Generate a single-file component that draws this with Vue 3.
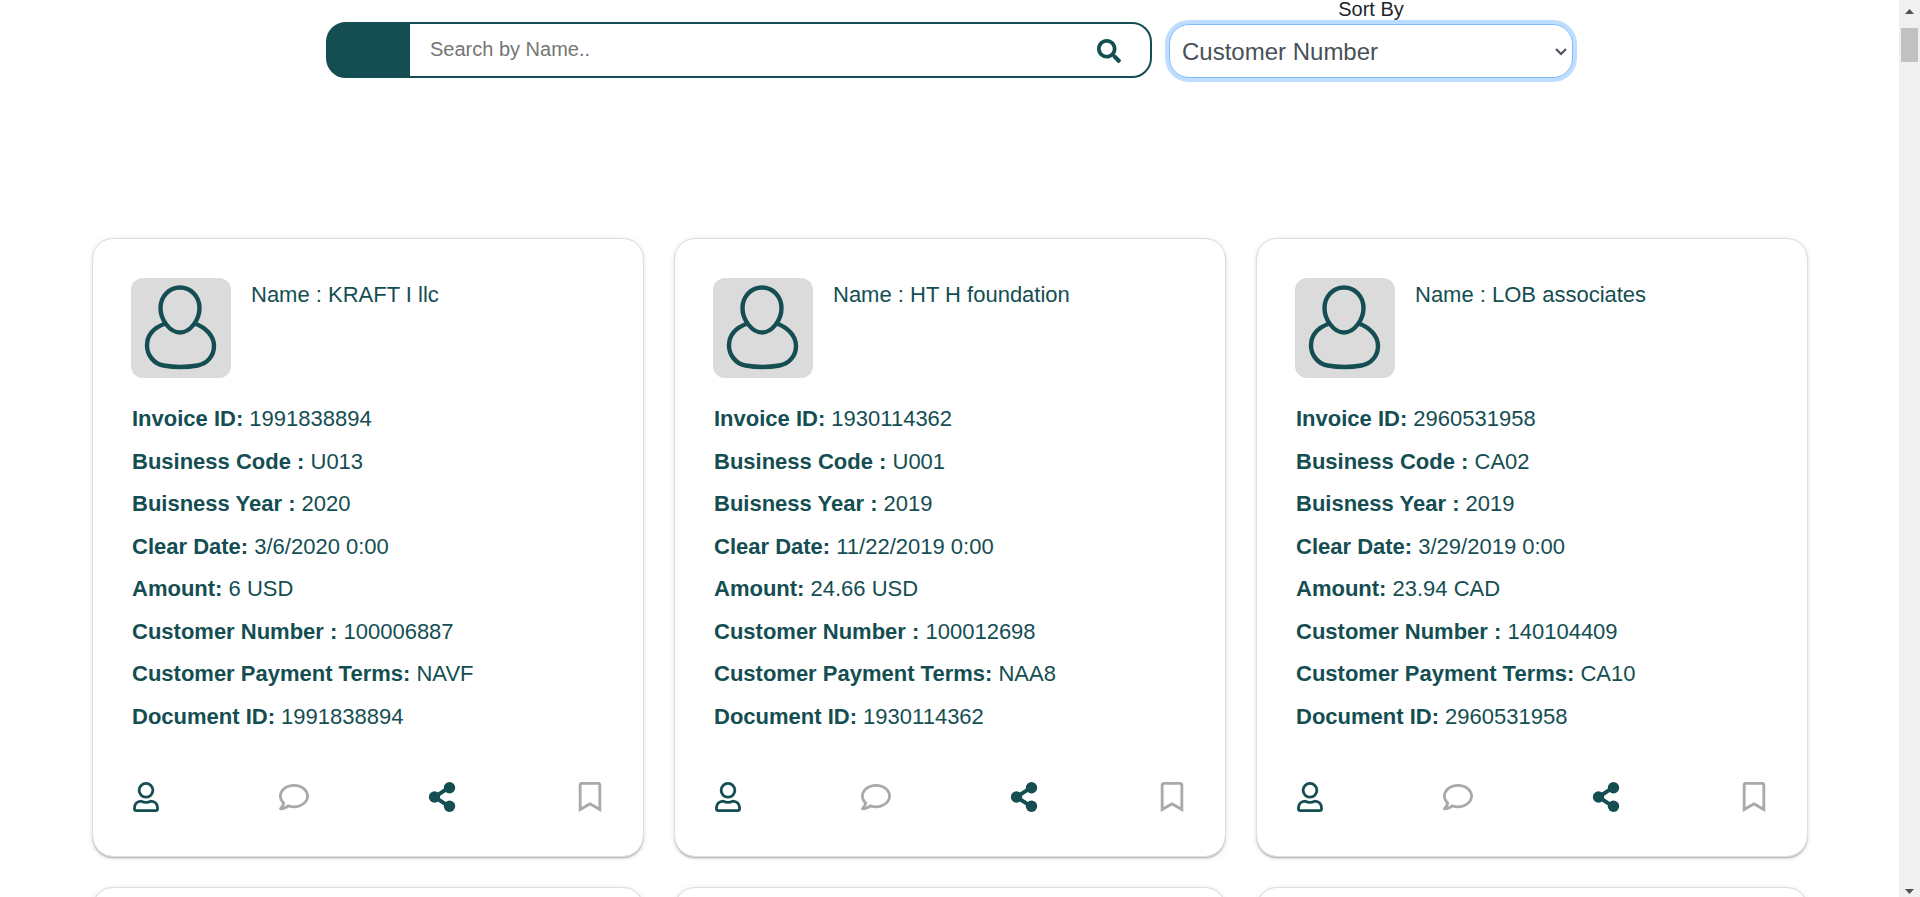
<script setup>
import { ref } from 'vue'

const search = ref('')
const sortBy = ref('Customer Number')
const sortOptions = ['Customer Number', 'Invoice ID', 'Business Code', 'Clear Date', 'Amount']

const labels = [
  ['Invoice ID:', 'invoice'],
  ['Business Code :', 'code'],
  ['Buisness Year :', 'year'],
  ['Clear Date:', 'clear'],
  ['Amount:', 'amount'],
  ['Customer Number :', 'customer'],
  ['Customer Payment Terms:', 'terms'],
  ['Document ID:', 'invoice'],
]

const invoices = [
  { name: 'KRAFT I llc', invoice: '1991838894', code: 'U013', year: '2020', clear: '3/6/2020 0:00', amount: '6 USD', customer: '100006887', terms: 'NAVF' },
  { name: 'HT H foundation', invoice: '1930114362', code: 'U001', year: '2019', clear: '11/22/2019 0:00', amount: '24.66 USD', customer: '100012698', terms: 'NAA8' },
  { name: 'LOB associates', invoice: '2960531958', code: 'CA02', year: '2019', clear: '3/29/2019 0:00', amount: '23.94 CAD', customer: '140104409', terms: 'CA10' },
]
</script>

<template>
  <div class="window">
    <main class="page">
      <form class="toolbar" @submit.prevent>
        <div class="search">
          <span class="search-cap"></span>
          <input v-model="search" class="search-input" type="text" placeholder="Search by Name.." aria-label="Search by Name" />
          <button class="search-button" type="submit" aria-label="Search">
            <svg viewBox="0 0 512 512" width="24" height="24"><path fill="currentColor" d="M505 442.700 405.300 343c-4.500-4.500-10.600-7-17-7H372c27.600-35.300 44-79.700 44-128C416 93.100 322.900 0 208 0S0 93.100 0 208s93.100 208 208 208c48.300 0 92.700-16.400 128-44v16.300c0 6.400 2.500 12.500 7 17l99.700 99.700c9.400 9.400 24.600 9.400 33.900 0l28.300-28.300c9.400-9.400 9.400-24.600.1-34zM208 336c-70.700 0-128-57.200-128-128 0-70.700 57.200-128 128-128 70.700 0 128 57.200 128 128 0 70.700-57.200 128-128 128z" /></svg>
          </button>
        </div>
        <div class="sort">
          <label class="sort-label" for="sort">Sort By</label>
          <div class="sort-box">
            <select id="sort" v-model="sortBy" class="sort-select">
              <option v-for="o in sortOptions" :key="o">{{ o }}</option>
            </select>
            <svg class="chevron" viewBox="0 0 12 8" width="12" height="8"><path d="M1 1l5 5 5-5" fill="none" stroke="#495057" stroke-width="2" /></svg>
          </div>
        </div>
      </form>

      <section class="cards">
        <article v-for="inv in invoices" :key="inv.invoice" class="card">
          <header class="card-head">
            <svg class="avatar" viewBox="0 0 100 100" width="100" height="100">
              <g fill="none" stroke="#144e52" stroke-width="4.400">
                <path d="M49 9.500C60 9.500 68.500 18.500 68.500 30C68.500 42 59 54.500 49 54.500S29.500 42 29.500 30C29.500 18.500 38 9.500 49 9.500Z" />
                <path d="M34.500 45.500C23 49.500 16 57 16 67.500C16 77 23 86 32.500 87.500C42 89.200 57 89.200 66.500 87.500C76 86 83 78 83 68C83 58 75 49.500 63.500 45.500" />
              </g>
            </svg>
            <p class="name">Name : {{ inv.name }}</p>
          </header>
          <ul class="details">
            <li v-for="l in labels" :key="l[0]"><b>{{ l[0] }}</b> {{ inv[l[1]] }}</li>
          </ul>
          <footer class="actions">
            <button class="action" type="button" aria-label="Profile">
              <svg viewBox="0 0 30 30" width="30" height="30"><g fill="none" stroke="currentColor" stroke-width="2.800"><circle cx="15" cy="8.300" r="6.900" /><path d="M10.300 19.200C5.800 19.200 3.400 22.300 3.400 26.600Q3.400 28.600 5.200 28.600H24.800Q26.600 28.600 26.600 26.600C26.600 22.300 24.200 19.200 19.700 19.200Q17.500 20.300 15 20.300T10.300 19.200Z" /></g></svg>
            </button>
            <button class="action muted" type="button" aria-label="Comment">
              <svg viewBox="0 0 512 512" width="30" height="30"><path fill="currentColor" d="M256 32C114.600 32 0 125.100 0 240c0 47.600 19.900 91.200 52.900 126.300C38 405.700 7 439.100 6.500 439.500c-6.600 7-8.400 17.200-4.600 26S14.400 480 24 480c61.500 0 110-25.700 139.100-46.300C192 442.800 223.200 448 256 448c141.400 0 256-93.100 256-208S397.400 32 256 32zm0 368c-26.700 0-53.100-4.100-78.400-12.100l-22.700-7.200-19.500 13.800c-14.300 10.100-33.900 21.400-57.500 29 7.300-12.100 14.400-25.700 19.900-40.200l10.600-28.100-20.600-21.800C69.700 314.100 48 282.200 48 240c0-88.200 93.300-160 208-160s208 71.800 208 160-93.300 160-208 160z" /></svg>
            </button>
            <button class="action" type="button" aria-label="Share">
              <svg viewBox="0 0 30 30" width="30" height="30"><path d="M22 5.600 7.500 15l14.500 9.400" fill="none" stroke="currentColor" stroke-width="4" /><g fill="currentColor"><circle cx="22.500" cy="5.700" r="5.700" /><circle cx="7.500" cy="15" r="5.700" /><circle cx="22.500" cy="24.300" r="5.700" /></g></svg>
            </button>
            <button class="action muted" type="button" aria-label="Bookmark">
              <svg viewBox="-64 0 512 512" width="30" height="30"><path fill="currentColor" d="M336 0H48C21.500 0 0 21.500 0 48v464l192-112 192 112V48c0-26.500-21.500-48-48-48zm0 428.400-144-84-144 84V54a6 6 0 0 1 6-6h276a6 6 0 0 1 6 6z" /></svg>
            </button>
          </footer>
        </article>
        <article v-for="n in 3" :key="n" class="card"></article>
      </section>
    </main>

    <div class="scrollbar" aria-hidden="true">
      <svg viewBox="0 0 9 5" width="9" height="5"><path d="M0 5 4.500 0 9 5Z" fill="#505050" /></svg>
      <div class="track"><div class="thumb"></div></div>
      <svg viewBox="0 0 9 5" width="9" height="5"><path d="M0 0 4.500 5 9 0Z" fill="#505050" /></svg>
    </div>
  </div>
</template>

<style>
body {
  margin: 0;
  background: #fff;
}
</style>

<style scoped>
* {
  box-sizing: border-box;
}
.window {
  display: flex;
  height: 100vh;
  overflow: hidden;
  font-family: "Liberation Sans", Arial, sans-serif;
  color: #144e52;
}
.page {
  flex: 1;
  min-width: 0;
}
.toolbar {
  display: flex;
  justify-content: center;
  align-items: flex-end;
  gap: 17px;
  padding: 0 326px;
}
.search {
  display: flex;
  flex: 2;
  max-width: 826px;
  height: 56px;
  border: 2px solid #144e52;
  border-radius: 20px;
  background: linear-gradient(to right, #144e52 40px, #fff 40px) border-box;
  overflow: hidden;
}
.search-cap {
  width: 82px;
  background: #144e52;
}
.search-input {
  flex: 1;
  min-width: 0;
  padding: 0 20px 2px;
  border: 0;
  outline: 0;
  font: 20px "Liberation Sans", Arial, sans-serif;
  color: #144e52;
}
.search-input::placeholder {
  color: #757575;
}
.search-button {
  display: flex;
  align-items: center;
  justify-content: center;
  width: 82px;
  padding: 2px 0 0;
  border: 0;
  background: none;
  color: #144e52;
}
.sort {
  flex: 1;
  max-width: 404px;
  text-align: center;
}
.sort-label {
  display: block;
  margin-bottom: 6px;
  font-size: 20px;
  line-height: 18px;
  color: #212529;
}
.sort-box {
  position: relative;
}
.sort-select {
  display: block;
  width: 100%;
  height: 54px;
  padding: 0 12px;
  appearance: none;
  border: 1px solid #80bdff;
  border-radius: 20px;
  outline: 0;
  box-shadow: 0 0 0 4px #bfdeff;
  background: #fff;
  font: 24px "Liberation Sans", Arial, sans-serif;
  color: #495057;
}
.chevron {
  position: absolute;
  right: 6px;
  top: 24px;
}
.cards {
  display: grid;
  grid-template-columns: repeat(3, 1fr);
  gap: 32px;
  margin-top: 161px;
  padding: 0 92px 0 93px;
}
.card {
  min-height: 100px;
  padding: 39px 38px 44px;
  border-radius: 20px;
  box-shadow: 0 0 0 1px #dedede, 0 2px 2px rgba(0, 0, 0, 0.3), 0 1px 6px rgba(0, 0, 0, 0.14);
}
.card-head {
  display: flex;
  gap: 20px;
}
.avatar {
  border-radius: 12px;
  background: #dbdbdb;
}
.name {
  margin: 0;
  font-size: 22px;
  line-height: 34px;
}
.details {
  display: grid;
  grid-auto-rows: 1fr;
  height: 340px;
  margin: 20px 0 44px;
  padding: 0 1px;
  list-style: none;
  font-size: 22px;
  line-height: 42px;
}
.actions {
  display: flex;
  justify-content: space-between;
}
.action {
  padding: 0;
  border: 0;
  background: none;
  color: #144e52;
}
.action.muted {
  color: #a9a9a9;
}
.action svg {
  display: block;
}
.scrollbar {
  display: flex;
  flex-direction: column;
  align-items: center;
  width: 21px;
  padding: 9px 0 3px;
  background: #f0f0f0;
}
.track {
  flex: 1;
  padding-top: 14px;
}
.thumb {
  width: 17px;
  height: 34px;
  background: #c1c1c1;
}
</style>
